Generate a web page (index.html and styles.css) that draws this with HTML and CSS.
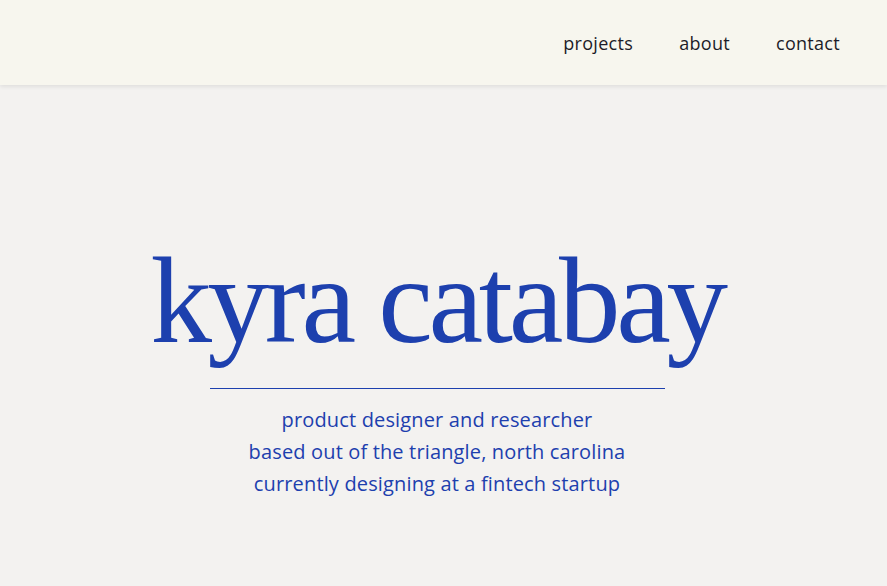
FILE: index.html
```html
<!DOCTYPE html>
<html lang="en">
<head>
<meta charset="utf-8">
<title>kyra catabay</title>
<link rel="stylesheet" href="styles.css">
</head>
<body>
<header class="site-header">
  <nav class="nav">
    <a class="nav-link" href="#">projects</a>
    <a class="nav-link" href="#">about</a>
    <a class="nav-link" href="#">contact</a>
  </nav>
</header>
<main class="hero">
  <h1 class="hero-title">kyra catabay</h1>
  <hr class="hero-rule">
  <div class="hero-sub">
    <p>product designer and researcher</p>
    <p>based out of the triangle, north carolina</p>
    <p>currently designing at a fintech startup</p>
  </div>
</main>
</body>
</html>
```
FILE: styles.css
```css
html, body {
  margin: 0;
  padding: 0;
}
body {
  background: #f3f2f0;
  font-family: "Open Sans", "Liberation Sans", sans-serif;
  width: 887px;
  height: 586px;
  overflow: hidden;
}
.site-header {
  height: 85px;
  background: #f7f6ee;
  box-shadow: 0 2px 4px rgba(0,0,0,0.08);
  display: flex;
  justify-content: flex-end;
  align-items: center;
  padding-right: 47px;
  position: relative;
}
.nav {
  display: flex;
  gap: 46px;
  margin-top: 1px;
}
.nav-link {
  color: #1c1c28;
  text-decoration: none;
  font-size: 18px;
  font-weight: 500;
  font-family: "Open Sans", sans-serif;
  letter-spacing: 0.3px;
}
.hero {
  display: flex;
  flex-direction: column;
  align-items: center;
  padding-top: 154px;
  padding-right: 13px;
}
.hero-title {
  margin: 0;
  font-family: "Liberation Serif", serif;
  font-weight: 400;
  font-size: 123px;
  line-height: 1;
  color: #1d40ae;
  letter-spacing: -4.3px;
}
.hero-rule {
  width: 455px;
  margin: 26px 0 0 0;
  border: 0;
  border-top: 1px solid #1d40ae;
  height: 0;
}
.hero-sub {
  margin-top: 15px;
  text-align: center;
  color: #1d40ae;
  font-size: 20px;
  line-height: 32px;
  letter-spacing: 0.15px;
}
.hero-sub p {
  margin: 0;
}
```
